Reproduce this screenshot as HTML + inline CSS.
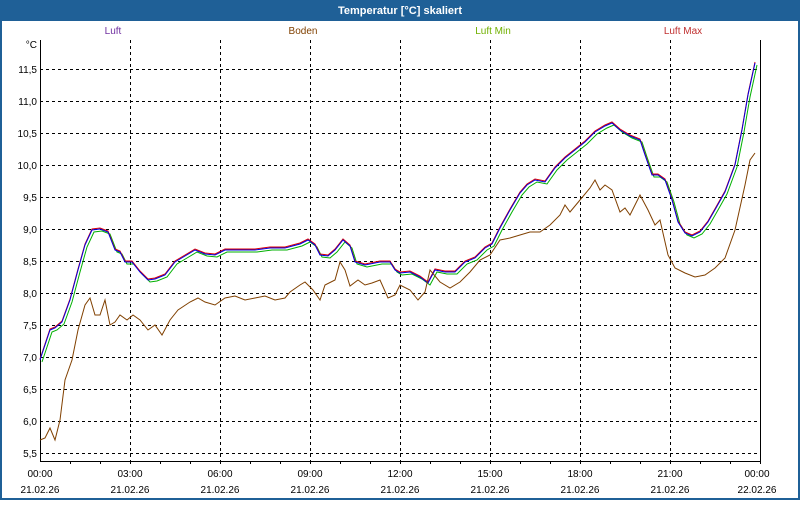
<!DOCTYPE html><html><head><style>body{margin:0;width:800px;height:500px;overflow:hidden;background:#fff}</style></head><body>
<svg width="800" height="500" xmlns="http://www.w3.org/2000/svg" font-family="Liberation Sans, sans-serif" font-size="10">
<rect x="0" y="0" width="800" height="500" fill="#1f6097"/>
<rect x="2" y="21" width="796" height="477" fill="#fff"/>
<text x="400" y="14" fill="#fff" font-weight="bold" font-size="11" text-anchor="middle">Temperatur [°C] skaliert</text>
<text x="113" y="34" fill="#7030a0" text-anchor="middle">Luft</text>
<text x="303" y="34" fill="#804000" text-anchor="middle">Boden</text>
<text x="493" y="34" fill="#70b000" text-anchor="middle">Luft Min</text>
<text x="683" y="34" fill="#c03030" text-anchor="middle">Luft Max</text>
<text x="37" y="48" text-anchor="end">°C</text>
<g stroke="#000" stroke-dasharray="3,3" stroke-width="1">
<path d="M40 69.5H760M40 101.5H760M40 133.5H760M40 165.5H760M40 197.5H760M40 229.5H760M40 261.5H760M40 293.5H760M40 325.5H760M40 357.5H760M40 389.5H760M40 421.5H760M40 453.5H760"/>
<path d="M130.5 40V461M220.5 40V461M310.5 40V461M400.5 40V461M490.5 40V461M580.5 40V461M670.5 40V461"/>
</g>
<g text-anchor="end">
<text x="37" y="73">11,5</text><text x="37" y="105">11,0</text><text x="37" y="137">10,5</text><text x="37" y="169">10,0</text><text x="37" y="201">9,5</text><text x="37" y="233">9,0</text><text x="37" y="265">8,5</text><text x="37" y="297">8,0</text><text x="37" y="329">7,5</text><text x="37" y="361">7,0</text><text x="37" y="393">6,5</text><text x="37" y="425">6,0</text><text x="37" y="457">5,5</text>
</g>
<path d="M40.5 40V461.5H760.5V40" fill="none" stroke="#000"/>
<path d="M70.5 461V464M100.5 461V464M130.5 461V464M160.5 461V464M190.5 461V464M220.5 461V464M250.5 461V464M280.5 461V464M310.5 461V464M340.5 461V464M370.5 461V464M400.5 461V464M430.5 461V464M460.5 461V464M490.5 461V464M520.5 461V464M550.5 461V464M580.5 461V464M610.5 461V464M640.5 461V464M670.5 461V464M700.5 461V464M730.5 461V464M760.5 461V464" stroke="#000"/>
<g text-anchor="middle">
<text x="40" y="477">00:00</text><text x="130" y="477">03:00</text><text x="220" y="477">06:00</text><text x="310" y="477">09:00</text><text x="400" y="477">12:00</text><text x="490" y="477">15:00</text><text x="580" y="477">18:00</text><text x="670" y="477">21:00</text><text x="757" y="477">00:00</text>
<text x="40" y="493">21.02.26</text><text x="130" y="493">21.02.26</text><text x="220" y="493">21.02.26</text><text x="310" y="493">21.02.26</text><text x="400" y="493">21.02.26</text><text x="490" y="493">21.02.26</text><text x="580" y="493">21.02.26</text><text x="670" y="493">21.02.26</text><text x="757" y="493">22.02.26</text>
</g>
<defs><path id="c" fill="none" d="M40 360L45 345L50 330L55 328L62 322L70 300L78 270L85 245L92 230L100 229L108 232L115 250L120 252L125 262L132 262L140 272L148 280L155 279L165 275L175 262L185 256L195 250L205 254L215 255L225 250L240 250L255 250L270 248L285 248L300 244L308 240L315 245L320 255L328 256L335 250L343 240L350 246L355 262L365 265L380 262L390 262L395 270L400 273L410 272L420 277L428 283L435 270L445 272L455 272L465 262L475 258L485 248L492 244L500 228L510 210L520 193L527 185L535 180L545 182L555 168L565 158L575 150L585 142L595 132L605 126L612 123L620 130L630 136L640 140L645 155L652 175L658 175L665 180L672 200L678 222L685 233L692 236L700 232L708 222L716 208L725 192L735 165L742 130L748 95L755 63"/></defs>
<use href="#c" stroke="#00b000" transform="translate(2,2)"/>
<use href="#c" stroke="#e00000" transform="translate(0,-1)"/>
<use href="#c" stroke="#0000e0"/>
<path fill="none" stroke="#804000" d="M40 440L45 438L50 428L55 440L60 420L65 380L72 360L78 330L85 305L90 298L95 315L100 315L105 300L110 325L115 322L120 315L127 320L133 315L140 320L148 330L155 325L162 335L170 320L178 310L190 302L198 298L205 302L215 305L225 298L235 296L245 300L255 298L265 296L275 300L285 298L290 292L300 285L305 282L313 290L320 300L325 285L335 280L340 262L345 270L350 286L358 280L365 285L372 283L380 280L388 298L395 295L400 285L410 290L418 300L425 292L430 270L440 282L450 288L460 282L470 272L480 260L490 255L500 240L510 238L520 235L530 232L540 232L550 225L560 215L565 205L570 212L580 200L590 188L595 180L600 190L605 185L612 190L620 212L625 208L630 215L640 195L648 210L655 225L660 220L668 255L675 268L685 273L695 277L705 275L715 268L725 258L735 230L745 185L750 160L755 153"/>
</svg></body></html>
